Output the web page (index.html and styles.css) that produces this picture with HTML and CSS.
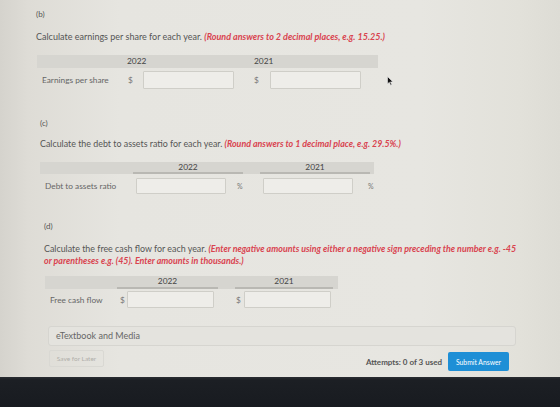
FILE: index.html
```html
<!DOCTYPE html>
<html lang="en">
<head>
  <meta charset="UTF-8">
  <title>Ratios Problem</title>
  <link rel="stylesheet" href="styles.css">
</head>
<body>
  <div class="screen">
    <div class="part part-b">
      <div class="tag">(b)</div>
      <div class="ask">Calculate earnings per share for each year. <em>(Round answers to 2 decimal places, e.g. 15.25.)</em></div>
      <div class="thead thead-b">
        <span class="yr">2022</span>
        <span class="yr">2021</span>
      </div>
      <div class="trow trow-b">
        <span class="lbl">Earnings per share</span>
        <span class="unit u1">$</span>
        <input type="text" class="box">
        <span class="unit u2">$</span>
        <input type="text" class="box">
      </div>
    </div>

    <div class="part part-c">
      <div class="tag">(c)</div>
      <div class="ask">Calculate the debt to assets ratio for each year. <em>(Round answers to 1 decimal place, e.g. 29.5%.)</em></div>
      <div class="thead thead-c">
        <span class="yr">2022</span>
        <span class="yr">2021</span>
      </div>
      <div class="trow trow-c">
        <span class="lbl">Debt to assets ratio</span>
        <input type="text" class="box">
        <span class="unit u1">%</span>
        <input type="text" class="box">
        <span class="unit u2">%</span>
      </div>
    </div>

    <div class="part part-d">
      <div class="tag">(d)</div>
      <div class="ask">Calculate the free cash flow for each year. <em>(Enter negative amounts using either a negative sign preceding the number e.g. -45<br>or parentheses e.g. (45). Enter amounts in thousands.)</em></div>
      <div class="thead thead-d">
        <span class="yr">2022</span>
        <span class="yr">2021</span>
      </div>
      <div class="trow trow-d">
        <span class="lbl">Free cash flow</span>
        <span class="unit u1">$</span>
        <input type="text" class="box">
        <span class="unit u2">$</span>
        <input type="text" class="box">
      </div>
    </div>

    <div class="media">eTextbook and Media</div>

    <div class="actions">
      <button class="save">Save for Later</button>
      <div class="submit-wrap">
        <span class="attempts">Attempts: 0 of 3 used</span>
        <button class="submit">Submit Answer</button>
      </div>
    </div>

    <!-- mouse pointer -->
    <svg class="pointer" width="7" height="10" viewBox="0 0 7 10">
      <path d="M0.5 0.5 L0.5 8 L2.3 6.3 L3.6 9.3 L4.8 8.8 L3.5 5.9 L6 5.9 Z" fill="#111" stroke="#eee" stroke-width="0.6"/>
    </svg>
  </div>
  <div class="bezel"></div>
</body>
</html>
```

FILE: styles.css
```css
body {
  margin: 0;
  font-family: Lato, 'Open Sans', sans-serif;
  color: #555;
  background: #1c1f24;
}
.screen {
  position: relative;
  height: 377px;
  box-sizing: border-box;
  padding-top: 9px;
  background: linear-gradient(to right, #d5d3cd 0, #dedcd6 28px, #e6e5e0 120px, #e7e6e1 420px, #e2e1da 520px, #dddcd5 560px);
  overflow: hidden;
}
.bezel {
  height: 30px;
  background: linear-gradient(#2a2d32 0, #1c1f24 3px, #181b20 100%);
}

.tag {
  font-size: 8px;
  line-height: 10px;
  color: #555;
}
.ask {
  font-size: 9px;
  line-height: 10px;
  color: #555;
  white-space: nowrap;
}
.ask em {
  color: #d9434f;
  font-weight: bold;
}

.thead {
  display: flex;
  background: #d6d5d0;
  font-size: 8.4px;
  color: #444;
}
.trow {
  display: flex;
  align-items: center;
  font-size: 8.3px;
}
.lbl {
  box-sizing: border-box;
  color: #666;
}
.unit {
  box-sizing: border-box;
  color: #777;
}
.box {
  box-sizing: border-box;
  margin: 0;
  padding: 0;
  background: #eeede9;
  border: 1px solid #cfcec8;
  border-radius: 1px;
}

/* (b) earnings per share */
.part-b {
  margin-left: 36px;
}
.part-b .ask {
  margin-top: 13px;
}
.thead-b {
  margin: 13px 0 0 1px;
  width: 341px;
  height: 13px;
  line-height: 13px;
  padding-left: 90px;
  box-sizing: border-box;
}
.thead-b .yr:first-child {
  width: 127px;
}
.trow-b {
  margin: 3px 0 0 1px;
}
.trow-b .lbl {
  width: 91px;
  padding-left: 5px;
}
.trow-b .u1 {
  width: 15px;
}
.trow-b .u2 {
  width: 36px;
  padding-left: 20px;
}
.trow-b .box {
  width: 91px;
  height: 18px;
}

/* (c) debt to assets */
.part-c {
  margin: 29px 0 0 40px;
}
.part-c .ask {
  margin-top: 11px;
  font-size: 8.9px;
}
.thead-c {
  margin-top: 13px;
  width: 334px;
  height: 12px;
  padding-left: 93px;
  box-sizing: border-box;
  gap: 17px;
}
.thead-c .yr {
  width: 110px;
  line-height: 10px;
  text-align: center;
  border-bottom: 2px solid #b9b8b3;
}
.trow-c {
  margin-top: 4px;
}
.trow-c .lbl {
  width: 96px;
  padding-left: 5px;
}
.trow-c .box {
  width: 90px;
  height: 16px;
}
.trow-c .box + .u1 {
  width: 37px;
  padding-left: 11px;
}
.trow-c .u2 {
  padding-left: 15px;
}
.trow-c .unit {
  font-size: 7px;
}

/* (d) free cash flow */
.part-d {
  margin: 27px 0 0 44px;
}
.part-d .ask {
  margin-top: 12px;
  font-size: 8.9px;
  line-height: 12px;
}
.thead-d {
  margin: 9px 0 0 1px;
  width: 293px;
  height: 13px;
  padding-left: 72px;
  box-sizing: border-box;
  gap: 17px;
}
.thead-d .yr {
  line-height: 11px;
  text-align: center;
  border-bottom: 2px solid #b9b8b3;
}
.thead-d .yr:first-child {
  width: 101px;
}
.thead-d .yr:last-child {
  width: 98px;
}
.trow-d {
  margin-top: 2px;
}
.trow-d .lbl {
  width: 76px;
  padding-left: 6px;
}
.trow-d .u1 {
  width: 7px;
}
.trow-d .u2 {
  width: 30px;
  padding-left: 22px;
}
.trow-d .box {
  width: 87px;
  height: 17px;
}

/* footer */
.media {
  margin: 18px 0 0 48px;
  width: 468px;
  height: 20px;
  box-sizing: border-box;
  padding-left: 7px;
  line-height: 18px;
  font-size: 9px;
  color: #666;
  background: #e4e3de;
  border: 1px solid #d6d5d0;
  border-radius: 3px;
}
.actions {
  display: flex;
  justify-content: space-between;
  align-items: flex-start;
  margin: 4px 0 0 49px;
  width: 460px;
}
button {
  font-family: Lato, 'Open Sans', sans-serif;
  cursor: pointer;
}
.save {
  width: 55px;
  height: 17px;
  padding: 0;
  font-size: 6.5px;
  color: #b0afaa;
  background: transparent;
  border: 1px solid #d9d8d3;
  border-radius: 2px;
}
.submit-wrap {
  display: flex;
  align-items: center;
  gap: 6px;
  margin-top: 2px;
}
.attempts {
  font-size: 8px;
  font-weight: bold;
  color: #555;
}
.submit {
  width: 61px;
  height: 19px;
  padding: 0;
  font-size: 6.8px;
  color: #fff;
  background: #1e8fd6;
  border: none;
  border-radius: 2px;
}
.pointer {
  position: absolute;
  left: 387px;
  top: 76px;
}
```
